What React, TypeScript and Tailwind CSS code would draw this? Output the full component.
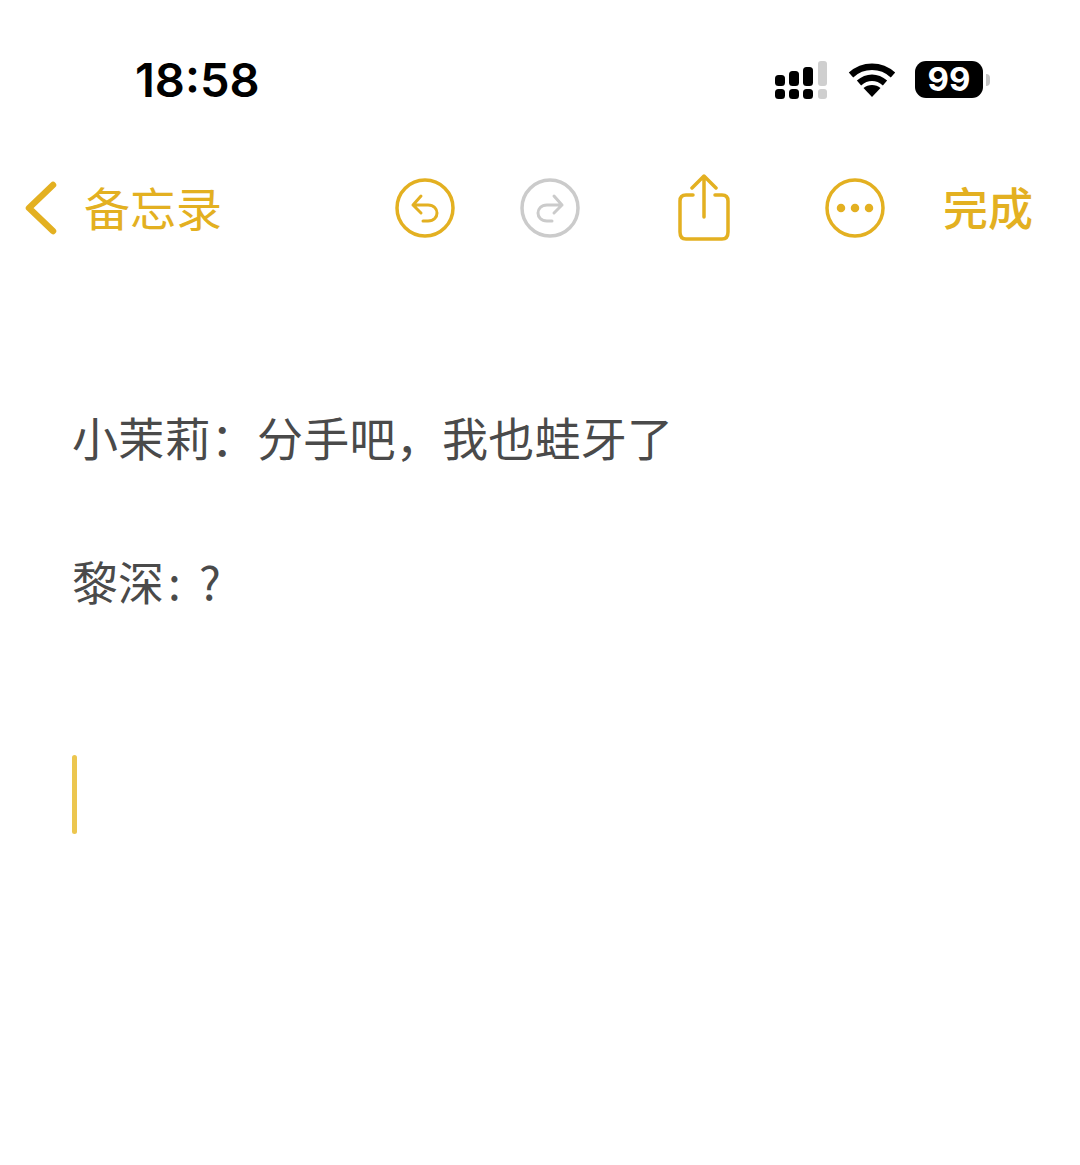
const cjk = { fontFamily: '"Noto Sans CJK SC", sans-serif' }

function SignalIcon() {
  return (
    <svg width="54" height="38" viewBox="0 0 54 38">
      <rect x="1" y="14" width="10" height="11" rx="3.5" fill="#000" />
      <rect x="1" y="28" width="10" height="10" rx="3.5" fill="#000" />
      <rect x="15" y="10" width="10" height="15" rx="3.5" fill="#000" />
      <rect x="15" y="28" width="10" height="10" rx="3.5" fill="#000" />
      <rect x="29" y="6" width="10" height="19" rx="3.5" fill="#000" />
      <rect x="29" y="28" width="10" height="10" rx="3.5" fill="#000" />
      <rect x="44" y="0" width="9" height="25" rx="3" fill="#cfcfcf" />
      <rect x="44" y="28" width="9" height="10" rx="3" fill="#cfcfcf" />
    </svg>
  )
}

function WifiIcon() {
  return (
    <svg width="48" height="36" viewBox="0 0 48 36" fill="none">
      <path d="M3 13 C15 2 33 2 45 13" stroke="#000" strokeWidth="6.5" />
      <path d="M11 21 C19 14 29 14 37 21" stroke="#000" strokeWidth="6.5" />
      <path d="M15.5 26 C20 22 28 22 32.500 26 L24 35 Z" fill="#000" />
    </svg>
  )
}

function Battery() {
  return (
    <div className="-ml-px flex items-center">
      <div
        className="flex h-[37px] w-[68px] items-center justify-center rounded-[11px] bg-black text-[33px] font-bold leading-none text-white"
        style={{ fontFamily: 'Inter, sans-serif' }}
      >
        99
      </div>
      <div className="ml-[3px] h-[12px] w-[4px] rounded-r-full bg-[#c4c4c4]" />
    </div>
  )
}

function CircleIcon({ color, children }: { color: string; children: React.ReactNode }) {
  return (
    <svg width="62" height="62" viewBox="0 0 62 62" fill="none" stroke={color} strokeWidth="3.5" strokeLinecap="round" strokeLinejoin="round">
      <circle cx="31" cy="31" r="28" />
      {children}
    </svg>
  )
}

function StatusBar() {
  return (
    <div className="flex h-[161px] items-center justify-between pb-[2px] pl-[135px] pr-[90px]">
      <div className="text-[47px] font-semibold leading-none text-black" style={{ fontFamily: 'Inter, sans-serif' }}>
        18:58
      </div>
      <div className="flex items-center gap-[20px]">
        <SignalIcon />
        <WifiIcon />
        <Battery />
      </div>
    </div>
  )
}

function NavBar() {
  return (
    <div className="flex h-[96px] items-center pb-[2px] pl-[24px] text-[#e3b021]" style={cjk}>
      <svg width="34" height="54" viewBox="0 0 34 54" fill="none" stroke="#e3b021" strokeWidth="6.5" strokeLinecap="round" strokeLinejoin="round">
        <path d="M29 4 L5 27 L29 50" />
      </svg>
      <span className="mb-[4px] ml-[26px] w-[135px] whitespace-nowrap text-[46px] leading-none">备忘录</span>
      <div className="ml-[175px]">
        <CircleIcon color="#e3b021">
          <path d="M19 28 L27 19 M19 28 L27 36 M19 28 H34 C46 28 46 44 34 44 H29" strokeWidth="3" />
        </CircleIcon>
      </div>
      <div className="ml-[63px]">
        <CircleIcon color="#cbcbcb">
          <path d="M43 28 L35 19 M43 28 L35 36 M43 28 H28 C16 28 16 44 28 44 H33" strokeWidth="3" />
        </CircleIcon>
      </div>
      <svg className="ml-[95px]" width="56" height="68" viewBox="0 0 56 68" fill="none" stroke="#e3b021" strokeWidth="3.5" strokeLinecap="round" strokeLinejoin="round">
        <path d="M17 21 H10 Q4 21 4 27 V58 Q4 65 10 65 H46 Q52 65 52 58 V27 Q52 21 46 21 H39" />
        <path d="M28 43 V3 M16 14 L28 2 L40 14" />
      </svg>
      <div className="ml-[92px]">
        <CircleIcon color="#e3b021">
          <circle cx="17" cy="31" r="2.5" fill="#e3b021" />
          <circle cx="31" cy="31" r="2.5" fill="#e3b021" />
          <circle cx="45" cy="31" r="2.5" fill="#e3b021" />
        </CircleIcon>
      </div>
      <span className="mb-[4px] ml-[57px] whitespace-nowrap text-[45px] font-medium leading-none">完成</span>
    </div>
  )
}

export default function App() {
  return (
    <div className="h-[1165px] w-[1080px] overflow-hidden bg-white">
      <StatusBar />
      <NavBar />
      <div className="pl-[72px] pt-[156px] text-[46px] leading-none text-[#4a4a4a]" style={cjk}>
        <p className="whitespace-nowrap tracking-[0.25px]">小茉莉：分手吧，我也蛙牙了</p>
        <p className="mt-[98px] flex items-center whitespace-nowrap">
          黎深<span className="w-[35px] pl-[4px]">:</span>?
        </p>
        <div className="mt-[152px] h-[79px] w-[5px] rounded-full bg-[#ecc64f]" />
      </div>
    </div>
  )
}
